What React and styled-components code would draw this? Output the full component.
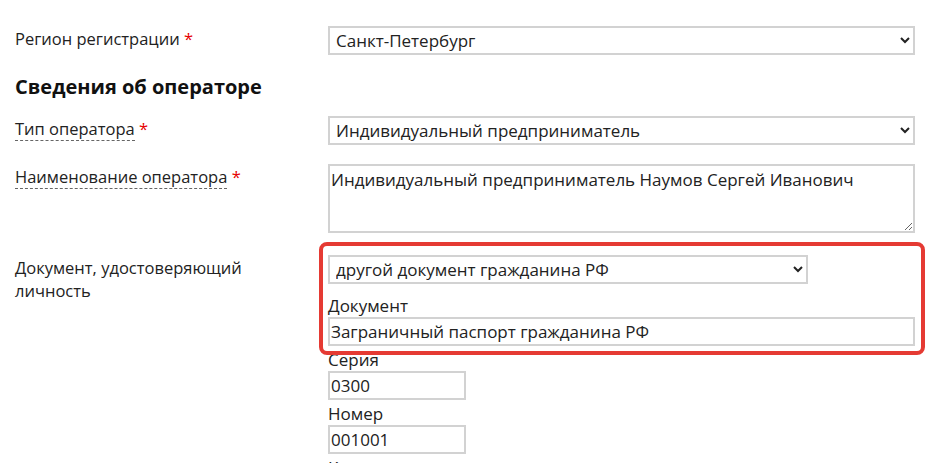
import React from "react";
import { styled, createGlobalStyle } from "styled-components";

const GlobalStyle = createGlobalStyle`
  html, body {
    margin: 0;
    padding: 0;
    background: #ffffff;
  }
  body {
    font-family: "Open Sans", "Liberation Sans", sans-serif;
    font-size: 16.5px;
    color: #222;
  }
`;

const Page = styled.div`
  padding: 26px 0 0 15px;
  height: 463px;
  overflow: hidden;
  box-sizing: border-box;
`;

const Row = styled.div`
  display: flex;
  align-items: flex-start;
  margin-bottom: 19px;
`;

const LabelCol = styled.div`
  width: 313px;
  flex: none;
  box-sizing: border-box;
  padding: 1px 40px 0 0;
  line-height: 23px;
`;

const Hint = styled.span`
  border-bottom: 1px dashed #666;
`;

const Required = styled.span`
  color: #e60000;
`;

const FieldCol = styled.div`
  position: relative;
  width: 587px;
  display: flex;
  flex-direction: column;
  align-items: flex-start;
`;

const Heading = styled.h2`
  margin: 0 0 16px;
  font-size: 20px;
  line-height: 26px;
  font-weight: 700;
  color: #111;
`;

const Select = styled.select`
  width: ${(props) => props.w || 587}px;
  height: 29px;
  box-sizing: border-box;
  border: 2px solid #d2d2d2;
  border-radius: 0;
  background: #fff;
  font-family: inherit;
  font-size: 17px;
  color: #222;
  padding: 0 2px;
  margin: 0 0 ${(props) => props.mb || 0}px;
`;

const TextArea = styled.textarea`
  display: block;
  width: 587px;
  height: 69px;
  box-sizing: border-box;
  border: 2px solid #d2d2d2;
  font-family: inherit;
  font-size: 17px;
  color: #222;
  padding: 2px 1px;
  margin: 0 0 3px;
`;

const SubLabel = styled.div`
  font-size: 17px;
  line-height: 22px;
`;

const Input = styled.input`
  width: ${(props) => props.w || 587}px;
  height: 29px;
  box-sizing: border-box;
  border: 2px solid #d2d2d2;
  font-family: inherit;
  font-size: 17px;
  color: #222;
  padding: 0 1px;
  margin: 0 0 3px;
`;

const Highlight = styled.div`
  position: absolute;
  left: -9px;
  top: -13px;
  width: 606px;
  height: 113px;
  box-sizing: border-box;
  border: 4px solid #e53a33;
  border-radius: 8px;
  pointer-events: none;
`;

function App() {
  return (
    <Page>
      <GlobalStyle />
      <Row>
        <LabelCol>
          Регион регистрации <Required>*</Required>
        </LabelCol>
        <FieldCol>
          <Select defaultValue="spb">
            <option value="spb">Санкт-Петербург</option>
          </Select>
        </FieldCol>
      </Row>

      <Heading>Сведения об операторе</Heading>

      <Row>
        <LabelCol>
          <Hint>Тип оператора</Hint> <Required>*</Required>
        </LabelCol>
        <FieldCol>
          <Select defaultValue="ip">
            <option value="ip">Индивидуальный предприниматель</option>
          </Select>
        </FieldCol>
      </Row>

      <Row>
        <LabelCol>
          <Hint>Наименование оператора</Hint> <Required>*</Required>
        </LabelCol>
        <FieldCol>
          <TextArea defaultValue="Индивидуальный предприниматель Наумов Сергей Иванович" />
        </FieldCol>
      </Row>

      <Row>
        <LabelCol>Документ, удостоверяющий личность</LabelCol>
        <FieldCol>
          <Select w={480} mb={11} defaultValue="other">
            <option value="other">другой документ гражданина РФ</option>
          </Select>
          <SubLabel>Документ</SubLabel>
          <Input defaultValue="Заграничный паспорт гражданина РФ" />
          <SubLabel>Серия</SubLabel>
          <Input w={138} defaultValue="0300" />
          <SubLabel>Номер</SubLabel>
          <Input w={138} defaultValue="001001" />
          <SubLabel>Кем выдан</SubLabel>
          <Highlight />
        </FieldCol>
      </Row>
    </Page>
  );
}

export default App;
